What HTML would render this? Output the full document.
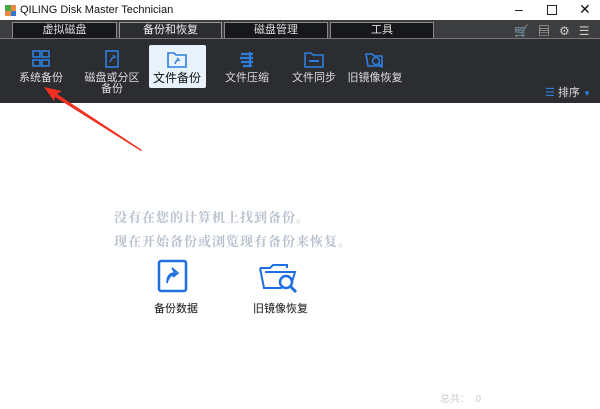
<!DOCTYPE html><html><head><meta charset="utf-8"><style>
*{margin:0;padding:0;box-sizing:border-box}
body{width:600px;height:409px;overflow:hidden;background:#fff;font-family:"Liberation Sans","Noto Sans CJK SC",sans-serif;position:relative}
.a{position:absolute}
.title{top:0;left:0;width:600px;height:20px;background:#fff;font-size:11px;color:#111}
.strip{top:20px;left:0;width:600px;height:18px;background:#3d3e40}
.tab{top:22px;height:17px;background:#17181b;border:1px solid #8a8a8a;border-bottom:none;color:#ddd;font-size:11px;text-align:center;line-height:15px}
.tab.on{background:#2b2d31;color:#eee;border-color:#999}
.bar{top:38px;left:0;width:600px;height:65px;background:#2b2d31;border-top:1px solid #777}
.it{top:44px;width:60px;text-align:center;color:#ddd;font-size:11px;line-height:11px}
.it svg{display:block;margin:6px auto 5px}
.msg{color:#b8c1cd;font-family:"Noto Serif CJK SC",serif;font-size:13px;font-weight:bold;letter-spacing:1px}
</style></head><body>
<div class="a title">
<svg class="a" style="left:4px;top:4px" width="13" height="13"><rect x="1" y="1" width="11" height="11" fill="#e84" /><rect x="1" y="1" width="6" height="6" fill="#4a4"/><rect x="7" y="7" width="5" height="5" fill="#37c"/></svg>
<span class="a" style="left:20px;top:4px">QILING Disk Master Technician</span>
<span class="a" style="left:515px;top:1px;font-size:14px">–</span>
<span class="a" style="left:547px;top:5px;width:10px;height:10px;border:1px solid #222"></span>
<span class="a" style="left:579px;top:1px;font-size:14px">✕</span>
</div>
<div class="a strip"></div>
<div class="a tab" style="left:12px;width:105px">虚拟磁盘</div>
<div class="a tab on" style="left:119px;width:103px">备份和恢复</div>
<div class="a tab" style="left:224px;width:104px">磁盘管理</div>
<div class="a tab" style="left:330px;width:104px">工具</div>
<div class="a" style="left:514px;top:22px;color:#ccc;font-size:12px;letter-spacing:9px">🛒▤⚙☰</div>
<div class="a bar"></div>
<div class="a" style="left:149px;top:45px;width:57px;height:43px;background:#e8f2fb;border-radius:2px"></div>
<div class="a it" style="left:11px"><svg width="18" height="18"><g fill="none" stroke="#2e7ee0" stroke-width="1.6"><rect x="1" y="1" width="7" height="6"/><rect x="10" y="1" width="7" height="6"/><rect x="1" y="10" width="7" height="6"/><rect x="10" y="10" width="7" height="6"/></g></svg>系统备份</div>
<div class="a it" style="left:82px"><svg width="18" height="18"><rect x="3" y="1" width="12" height="16" fill="none" stroke="#2e7ee0" stroke-width="1.6"/><path d="M7 12 q2-5 5-5 l-2-2" fill="none" stroke="#2e7ee0" stroke-width="1.4"/></svg>磁盘或分区<br>备份</div>
<div class="a it" style="left:147px;color:#111;font-size:12px"><svg width="20" height="18"><path d="M1 3h6l2 2h10v12H1z" fill="none" stroke="#2e7ee0" stroke-width="1.6"/><path d="M8 14q1-4 4-4l-2-2" fill="none" stroke="#2e7ee0" stroke-width="1.4"/></svg>文件备份</div>
<div class="a it" style="left:217px"><svg width="18" height="18"><path d="M3 4h12M2 8h13M3 12h12M5 16h9M12 2v15" stroke="#2e7ee0" stroke-width="2.2"/></svg>文件压缩</div>
<div class="a it" style="left:284px"><svg width="20" height="18"><path d="M1 3h6l2 2h10v12H1z" fill="none" stroke="#2e7ee0" stroke-width="1.6"/><path d="M5 11h10" stroke="#2e7ee0" stroke-width="2"/></svg>文件同步</div>
<div class="a it" style="left:345px"><svg width="20" height="18"><path d="M1 4h6l2 2h8v10H3z" fill="none" stroke="#2e7ee0" stroke-width="1.6"/><circle cx="11" cy="11" r="3.5" fill="none" stroke="#2e7ee0" stroke-width="1.6"/><path d="M13.5 13.5l4 4" stroke="#2e7ee0" stroke-width="1.8"/></svg>旧镜像恢复</div>
<div class="a" style="left:545px;top:84px;color:#ddd;font-size:11px"><span style="color:#2e7ee0">☰</span> 排序 <span style="color:#2e7ee0;font-size:8px">▼</span></div>
<svg class="a" style="left:0;top:0" width="600" height="409"><polygon points="44,87 62,91 57,94 142,150 141,151 55,97 54,101" fill="#f03020"/></svg>
<div class="a msg" style="left:114px;top:207px">没有在您的计算机上找到备份。</div>
<div class="a msg" style="left:114px;top:231px">现在开始备份或浏览现有备份来恢复。</div>
<svg class="a" style="left:157px;top:259px" width="32" height="34"><rect x="2" y="2" width="27" height="30" rx="2" fill="none" stroke="#1e6fe0" stroke-width="2.5"/><path d="M10 24q0-10 8-10l-3-5 6 5-5 4 2-3q-6 1-8 9z" fill="none" stroke="#1e6fe0" stroke-width="1.6"/></svg>
<svg class="a" style="left:258px;top:258px" width="42" height="36"><path d="M2 10h10l3-3h14v3" fill="none" stroke="#1e6fe0" stroke-width="2"/><path d="M2 10l4 20h18M7 14h30l-3 10" fill="none" stroke="#1e6fe0" stroke-width="2"/><circle cx="28" cy="24" r="6" fill="#fff" stroke="#1e6fe0" stroke-width="2.5"/><path d="M32 28l6 6" stroke="#1e6fe0" stroke-width="3"/></svg>
<div class="a" style="left:154px;top:300px;font-size:11px;color:#111">备份数据</div>
<div class="a" style="left:253px;top:300px;font-size:11px;color:#111">旧镜像恢复</div>
<div class="a" style="left:440px;top:390px;font-size:10px;color:#ccc">总共：&nbsp;&nbsp;0</div>
</body></html>
